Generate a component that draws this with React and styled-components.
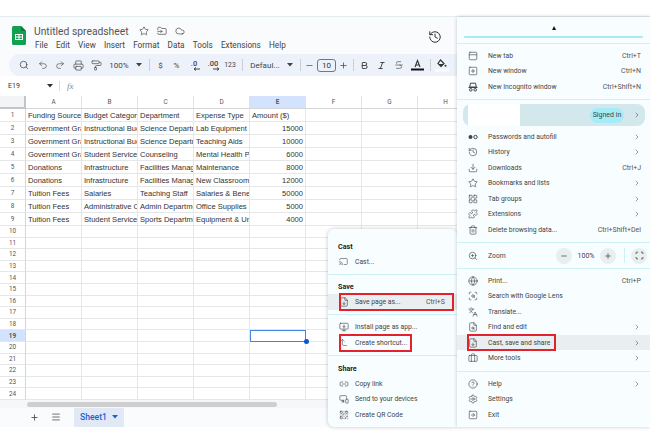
import React from 'react';
import styled, { createGlobalStyle } from 'styled-components';
import {
  Search, Undo2, Redo2, Printer, PaintRoller, Star, FolderInput, Cloud, History, Bold, Italic,
  Strikethrough, Minus, Plus, ChevronRight, PanelTop, SquarePlus, Download,
  LayoutGrid, Puzzle, Trash2, ZoomIn, Globe, ScanSearch, Languages, FileSearch, FileDown, Briefcase,
  CircleHelp, Settings, SquareArrowRight, Cast, MonitorDown, Link2, MonitorSmartphone, QrCode, Scan,
  Menu as MenuIcon, CornerLeftUp
} from 'lucide-react';

const Global = createGlobalStyle`
  html, body { margin: 0; padding: 0; background: #fff; }
  body { font-family: Roboto, "Liberation Sans", sans-serif; }
`;

const Page = styled.div`
  position: relative;
  width: 650px;
  height: 443px;
  overflow: hidden;
  background: #fff;
  padding-top: 16px;
  box-sizing: border-box;
`;
const Sheets = styled.div`
  width: 650px;
  height: 411px;
  background: #f9fbfd;
  border-top: 1px solid #e4eded;
  box-sizing: border-box;
  display: flex;
  flex-direction: column;
`;
const TitleBar = styled.div`
  height: 37px;
  flex: none;
  display: flex;
  padding: 9px 0 0 12px;
  box-sizing: border-box;
`;
const TitleBlock = styled.div`
  margin-left: 8px;
  margin-top: -2px;
  display: flex;
  flex-direction: column;
`;
const TitleLine = styled.div`
  display: flex;
  align-items: center;
  height: 14px;
  color: #444;
`;
const DocName = styled.span`
  font-size: 10.3px;
  color: #555;
  margin-right: 6px;
  white-space: nowrap;
`;
const TitleIcon = styled.span`
  display: inline-flex;
  width: 18px;
  justify-content: center;
  color: #333;
`;
const MenuBar = styled.div`
  display: flex;
  gap: 8.2px;
  margin-top: 1px;
  margin-left: 1px;
  font-size: 8.2px;
  line-height: 13px;
  color: #444;
`;
const HistoryBtn = styled.span`
  margin-left: auto;
  margin-right: 208px;
  margin-top: 3px;
  color: #333;
`;
const Toolbar = styled.div`
  height: 22px;
  flex: none;
  margin-left: 9px;
  padding-left: 6px;
  background: #edf2fa;
  border-radius: 11px 0 0 11px;
  display: flex;
  align-items: center;
  color: #444;
  font-size: 8px;
`;
const ToolBtn = styled.span`
  width: ${p => p.$w}px;
  flex: none;
  display: flex;
  align-items: center;
  justify-content: center;
  white-space: nowrap;
  font-size: ${p => (p.$small ? '6.8px' : 'inherit')};
`;
const ToolSep = styled.span`
  width: 8px;
  flex: none;
  height: 12px;
  background: linear-gradient(#c8ced6, #c8ced6) center / 1px 100% no-repeat;
`;
const SizeBox = styled.span`
  width: 19px;
  height: 13px;
  margin: 0 1px 0 2px;
  flex: none;
  border: 1px solid #777;
  border-radius: 3px;
  box-sizing: border-box;
  display: flex;
  align-items: center;
  justify-content: center;
  font-size: 8px;
  color: #333;
`;
const FormulaBar = styled.div`
  height: 20px;
  flex: none;
  background: #fff;
  display: flex;
  align-items: center;
  font-size: 7px;
  color: #333;
`;
const CellRef = styled.span`
  width: 47px;
  padding-left: 8px;
  box-sizing: border-box;
`;
const FxLabel = styled.span`
  margin-left: 6px;
  padding-left: 7px;
  border-left: 1px solid #ddd;
  font-family: "Liberation Serif", serif;
  font-style: italic;
  font-size: 9px;
  color: #888;
`;
const Grid = styled.div`
  flex: none;
  background: #fff;
  display: flex;
  flex-direction: column;
`;
const GridRow = styled.div`
  display: grid;
  grid-template-columns: 26px repeat(8, 56px);
  height: ${p => p.$h}px;
`;
const RowNum = styled.div`
  background: ${p => (p.$on ? '#d3e3fd' : '#fff')};
  border-right: 1px solid #d4d6d8;
  border-bottom: 1px solid #e6e7e8;
  box-sizing: border-box;
  display: flex;
  align-items: center;
  justify-content: center;
  font-size: 6.4px;
  font-weight: ${p => (p.$on ? 700 : 400)};
  color: #555;
`;
const Corner = styled(RowNum)`
  background: #f3f4f5;
  border-right: 2px solid #c2c4c6;
  border-bottom: 2px solid #c2c4c6;
`;
const ColHead = styled.div`
  background: ${p => (p.$on ? '#d3e3fd' : '#fff')};
  border-right: 1px solid #dfe1e3;
  border-bottom: 1px solid #d4d6d8;
  box-sizing: border-box;
  text-align: center;
  font-size: 6.4px;
  line-height: 12px;
  font-weight: ${p => (p.$on ? 700 : 400)};
  color: #555;
`;
const Cell = styled.div`
  border-right: 1px solid #e6e7e8;
  border-bottom: 1px solid #e6e7e8;
  box-sizing: border-box;
  padding: 0 2px;
  font-family: "Liberation Sans", Arial, sans-serif;
  font-size: 7.55px;
  line-height: 13px;
  color: #333;
  white-space: nowrap;
  overflow: hidden;
  text-align: ${p => (p.$num ? 'right' : 'left')};
`;
const SelectedCell = styled.div`
  position: relative;
  box-sizing: border-box;
  border: 1.5px solid #4285d8;
`;
const Handle = styled.span`
  position: absolute;
  right: -3.5px;
  bottom: -3.5px;
  width: 5px;
  height: 5px;
  border-radius: 50%;
  background: #0b57d0;
`;
const ScrollArea = styled.div`
  height: 8px;
  flex: none;
  padding: 2px 0 0 27px;
  box-sizing: border-box;
  background: #f6f7f8;
`;
const ScrollThumb = styled.div`
  width: 250px;
  height: 5px;
  border-radius: 3px;
  background: #cfcfcf;
`;
const BottomBar = styled.div`
  flex: 1;
  display: flex;
  align-items: center;
  color: #444;
  padding-left: 23px;
`;
const SheetBtn = styled.span`
  width: 22px;
  display: flex;
  justify-content: center;
`;
const SheetTab = styled.div`
  margin-left: 7px;
  width: 50px;
  height: 100%;
  background: #e1e9f7;
  color: #1a63cf;
  font-size: 8.6px;
  font-weight: 500;
  display: flex;
  align-items: center;
  justify-content: center;
  gap: 5px;
`;

const Panel = styled.div`
  position: absolute;
  top: ${p => p.$top}px;
  left: ${p => p.$left}px;
  width: ${p => p.$w}px;
  height: ${p => p.$h}px;
  background: #f8fdff;
  border-radius: ${p => p.$r};
  box-shadow: 0 0 4px rgba(0, 0, 0, 0.22);
  box-sizing: border-box;
  color: #444;
  font-size: 6.8px;
`;
const TopBlock = styled.div`
  height: 27px;
  padding: 8px 7px 0;
  box-sizing: border-box;
  display: flex;
  flex-direction: column;
  align-items: center;
  border-bottom: 1px solid #cdf1f8;
`;
const TopDot = styled.span`
  color: #111;
  font-size: 8px;
  line-height: 6px;
  height: 11px;
`;
const TopLine = styled.span`
  width: 100%;
  height: 2px;
  border-radius: 1px;
  background: #a5ecf8;
`;
const Section = styled.div`
  padding: ${p => p.$t ?? 4}px 0 ${p => p.$b ?? 4}px;
  border-bottom: ${p => (p.$last ? 'none' : '1px solid #cdf1f8')};
`;
const Row = styled.div`
  position: relative;
  height: 15.5px;
  display: flex;
  align-items: center;
  padding: 0 ${p => p.$pr ?? 9}px 0 ${p => p.$pl ?? 11}px;
  background: ${p => (p.$on ? '#e9eef0' : 'transparent')};
  white-space: nowrap;
`;
const Ico = styled.span`
  width: ${p => p.$w ?? 20}px;
  flex: none;
  display: flex;
  color: #444;
`;
const Label = styled.span`
  flex: 1;
`;
const Keys = styled.span`
  color: #555;
  font-size: 7px;
`;
const Heading = styled.div`
  height: 15.5px;
  line-height: 15.5px;
  padding-left: 10px;
  font-weight: 700;
  font-size: 7.2px;
  color: #222;
`;
const RedBox = styled.span`
  position: absolute;
  top: -1px;
  bottom: -1px;
  left: ${p => p.$l}px;
  width: ${p => p.$w}px;
  border: 2px solid #e3222e;
  box-sizing: border-box;
`;
const Profile = styled.div`
  height: 22px;
  margin: 0 5px 0 6px;
  border-radius: 8px;
  background: #d3e8ec;
  padding: 0 4px 0 5px;
  display: flex;
  align-items: center;
  justify-content: space-between;
  color: #444;
`;
const ProfileGap = styled.div`
  height: 3px;
`;
const WhiteBlock = styled.span`
  width: 52px;
  height: 22px;
  background: #fff;
`;
const ProfileEnd = styled.span`
  display: flex;
  align-items: center;
  gap: 9px;
`;
const Pill = styled.span`
  width: 34px;
  height: 15px;
  line-height: 15px;
  border-radius: 8px;
  background: #a5ecf8;
  text-align: center;
  font-size: 7px;
`;
const ZoomControls = styled.span`
  display: flex;
  align-items: center;
  margin-right: -6px;
`;
const RoundBtn = styled.span`
  width: 16px;
  height: 16px;
  border-radius: 50%;
  background: #e9eef0;
  display: flex;
  align-items: center;
  justify-content: center;
  color: #333;
`;
const ZoomPct = styled.span`
  width: 28px;
  text-align: center;
  font-size: 7px;
`;
const ZoomDivider = styled.span`
  width: 1px;
  height: 15px;
  background: #cdf1f8;
  margin: 0 6px 0 8px;
`;
const ZoomSection = styled(Section)`
  border-top: 1px solid #cdf1f8;
`;

const I = (C, s = 10, w = 1.5) => <C size={s} strokeWidth={w} />;
const Caret = () => (
  <svg width="6" height="4" viewBox="0 0 6 4"><path d="M0 0h6L3 3.5z" fill="currentColor" /></svg>
);
const Logo = () => (
  <svg width="14" height="19" viewBox="0 0 14 19">
    <path d="M1.5 0H9l5 5v12.5a1.5 1.5 0 0 1-1.5 1.5h-11A1.5 1.5 0 0 1 0 17.500V1.500A1.500 1.500 0 0 1 1.500 0z" fill="#12a150" />
    <path d="M9 0l5 5H9z" fill="#0c7a3c" />
    <path d="M3 8h8v6H3zM4 9v1.400h2.500V9zM7.500 9v1.400H10V9zM4 11.600V13h2.500v-1.400zM7.500 11.600V13H10v-1.400z" fill="#fff" fillRule="evenodd" />
  </svg>
);
const TextColor = () => (
  <svg width="13" height="12" viewBox="0 0 13 12">
    <path d="M4 8L6.500 1.500 9 8M4.900 6h3.200" fill="none" stroke="#333" strokeWidth="1.100" />
    <rect x="0" y="9.500" width="13" height="2" fill="#111" />
  </svg>
);
const FillColor = () => (
  <svg width="14" height="13" viewBox="0 0 14 13">
    <path d="M5.500 1l3.500 3.500-3 3L3 4.500z" fill="none" stroke="#333" strokeWidth="1.200" />
    <path d="M3.500 5h5.500l-3 2.800z" fill="#333" />
    <circle cx="10.500" cy="6.800" r="1" fill="#333" />
    <rect x="0" y="10.500" width="14" height="2" fill="#fff" />
  </svg>
);
const Dec = ({ t, m }) => (
  <svg width="16" height="12" viewBox="0 0 16 12">
    <text x="8" y="7" textAnchor="middle" fontSize="7.500" fontWeight="500" fill="#444" fontFamily="Roboto">{t}</text>
    <path d={m} stroke="#444" strokeWidth="1" fill="none" />
  </svg>
);
const Incognito = () => (
  <svg width="10" height="10" viewBox="0 0 10 10">
    <path d="M2.500 1.200h5L8.300 5H1.700zM.5 5.500h9" stroke="#444" strokeWidth="1" fill="none" />
    <circle cx="2.800" cy="7.800" r="1.300" stroke="#444" fill="none" />
    <circle cx="7.200" cy="7.800" r="1.300" stroke="#444" fill="none" />
  </svg>
);
const KeyGlyph = () => (
  <svg width="10" height="10" viewBox="0 0 10 10">
    <circle cx="2.500" cy="5" r="2" fill="#444" />
    <circle cx="7.500" cy="5" r="1.700" stroke="#444" fill="none" />
  </svg>
);

const rows = [
  ['Funding Source', 'Budget Category', 'Department', 'Expense Type', 'Amount ($)'],
  ['Government Gra', 'Instructional Bud', 'Science Departm', 'Lab Equipment', '15000'],
  ['Government Gra', 'Instructional Bud', 'Science Departm', 'Teaching Aids', '10000'],
  ['Government Gra', 'Student Services', 'Counseling', 'Mental Health P', '6000'],
  ['Donations', 'Infrastructure', 'Facilities Manag', 'Maintenance', '8000'],
  ['Donations', 'Infrastructure', 'Facilities Manag', 'New Classrooms', '12000'],
  ['Tuition Fees', 'Salaries', 'Teaching Staff', 'Salaries & Benef', '50000'],
  ['Tuition Fees', 'Administrative C', 'Admin Departme', 'Office Supplies', '5000'],
  ['Tuition Fees', 'Student Services', 'Sports Departme', 'Equipment & Un', '4000'],
];
const cols = ['A', 'B', 'C', 'D', 'E', 'F', 'G', 'H'];

const Chev = () => <ChevronRight size={8} strokeWidth={1.6} />;

const MenuRow = ({ icon, label, keys, arrow, on, box }) => (
  <Row $on={on}>
    <Ico>{icon}</Ico>
    <Label>{label}</Label>
    {keys && <Keys>{keys}</Keys>}
    {arrow && <Chev />}
    {box && <RedBox $l={box[0]} $w={box[1]} />}
  </Row>
);
const SubRow = ({ icon, label, keys, on, box }) => (
  <Row $on={on} $pl={11} $pr={12}>
    <Ico $w={16}>{icon}</Ico>
    <Label>{label}</Label>
    {keys && <Keys>{keys}</Keys>}
    {box && <RedBox $l={box[0]} $w={box[1]} />}
  </Row>
);

export default function App() {
  return (
    <Page>
      <Global />
      <Sheets>
        <TitleBar>
          <Logo />
          <TitleBlock>
            <TitleLine>
              <DocName>Untitled spreadsheet</DocName>
              <TitleIcon>{I(Star, 10)}</TitleIcon>
              <TitleIcon>{I(FolderInput, 10)}</TitleIcon>
              <TitleIcon>{I(Cloud, 10)}</TitleIcon>
            </TitleLine>
            <MenuBar>
              {['File', 'Edit', 'View', 'Insert', 'Format', 'Data', 'Tools', 'Extensions', 'Help'].map(m => (
                <span key={m}>{m}</span>
              ))}
            </MenuBar>
          </TitleBlock>
          <HistoryBtn>{I(History, 14, 1.7)}</HistoryBtn>
        </TitleBar>
        <Toolbar>
          <ToolBtn $w={18.5}>{I(Search, 10, 1.8)}</ToolBtn>
          <ToolBtn $w={18}>{I(Undo2, 10)}</ToolBtn>
          <ToolBtn $w={17.5}>{I(Redo2, 10)}</ToolBtn>
          <ToolBtn $w={18}>{I(Printer, 11)}</ToolBtn>
          <ToolBtn $w={18}>{I(PaintRoller, 11)}</ToolBtn>
          <ToolBtn $w={28}>100%</ToolBtn>
          <ToolBtn $w={12}><Caret /></ToolBtn>
          <ToolSep />
          <ToolBtn $w={15}>$</ToolBtn>
          <ToolBtn $w={17}>%</ToolBtn>
          <ToolBtn $w={18}><Dec t=".0" m="M8 10h6M10 8.500L8 10l2 1.500" /></ToolBtn>
          <ToolBtn $w={19}><Dec t=".00" m="M8 10h6M12 8.500l2 1.500-2 1.500" /></ToolBtn>
          <ToolBtn $w={16} $small>123</ToolBtn>
          <ToolSep />
          <ToolBtn $w={38}>Defaul...</ToolBtn>
          <ToolBtn $w={12}><Caret /></ToolBtn>
          <ToolSep />
          <ToolBtn $w={11}>{I(Minus, 9, 1.8)}</ToolBtn>
          <SizeBox>10</SizeBox>
          <ToolBtn $w={12}>{I(Plus, 9, 2)}</ToolBtn>
          <ToolSep />
          <ToolBtn $w={15}>{I(Bold, 9, 2.6)}</ToolBtn>
          <ToolBtn $w={18}>{I(Italic, 9, 2.6)}</ToolBtn>
          <ToolBtn $w={18}>{I(Strikethrough, 10)}</ToolBtn>
          <ToolBtn $w={18}><TextColor /></ToolBtn>
          <ToolSep />
          <ToolBtn $w={16}><FillColor /></ToolBtn>
        </Toolbar>
        <FormulaBar>
          <CellRef>E19</CellRef>
          <Caret />
          <FxLabel>fx</FxLabel>
        </FormulaBar>
        <Grid>
          <GridRow $h={13}>
            <Corner />
            {cols.map(c => <ColHead key={c} $on={c === 'E'}>{c}</ColHead>)}
          </GridRow>
          {Array.from({ length: 24 }, (_, r) => (
            <GridRow key={r} $h={r < 9 ? 13 : 11.6}>
              <RowNum $on={r === 18}>{r + 1}</RowNum>
              {cols.map((c, i) => {
                if (r === 18 && c === 'E') return <SelectedCell key={c}><Handle /></SelectedCell>;
                return (
                  <Cell key={c} $num={r > 0 && i === 4}>{rows[r] ? rows[r][i] : ''}</Cell>
                );
              })}
            </GridRow>
          ))}
        </Grid>
        <ScrollArea><ScrollThumb /></ScrollArea>
        <BottomBar>
          <SheetBtn>{I(Plus, 9, 2.2)}</SheetBtn>
          <SheetBtn>{I(MenuIcon, 10, 1.8)}</SheetBtn>
          <SheetTab>Sheet1 <Caret /></SheetTab>
        </BottomBar>
      </Sheets>

      <Panel $top={229} $left={328} $w={129} $h={198} $r="6px 6px 0 6px">
        <Section $t={9.5} $b={4}>
          <Heading>Cast</Heading>
          <SubRow icon={I(Cast, 9)} label="Cast..." />
        </Section>
        <Section $t={4} $b={4.5}>
          <Heading>Save</Heading>
          <SubRow icon={I(FileDown, 10)} label="Save page as..." keys="Ctrl+S" on box={[11, 115]} />
        </Section>
        <Section $t={4.5} $b={4.5}>
          <SubRow icon={I(MonitorDown, 10)} label="Install page as app..." />
          <SubRow icon={I(CornerLeftUp, 9)} label="Create shortcut..." box={[11, 73]} />
        </Section>
        <Section $t={4.5} $b={0} $last>
          <Heading>Share</Heading>
          <SubRow icon={I(Link2, 10)} label="Copy link" />
          <SubRow icon={I(MonitorSmartphone, 10)} label="Send to your devices" />
          <SubRow icon={I(QrCode, 10)} label="Create QR Code" />
        </Section>
      </Panel>

      <Panel $top={17} $left={457} $w={193} $h={410} $r="0">
        <TopBlock>
          <TopDot>▴</TopDot>
          <TopLine />
        </TopBlock>
        <Section>
          <MenuRow icon={I(PanelTop, 10)} label="New tab" keys="Ctrl+T" />
          <MenuRow icon={I(SquarePlus, 10)} label="New window" keys="Ctrl+N" />
          <MenuRow icon={<Incognito />} label="New Incognito window" keys="Ctrl+Shift+N" />
        </Section>
        <Section $t={4.5} $b={4.5} $last>
          <Profile>
            <WhiteBlock />
            <ProfileEnd><Pill>Signed in</Pill><Chev /></ProfileEnd>
          </Profile>
          <ProfileGap />
          <MenuRow icon={<KeyGlyph />} label="Passwords and autofill" arrow />
          <MenuRow icon={I(History, 10)} label="History" arrow />
          <MenuRow icon={I(Download, 10)} label="Downloads" keys="Ctrl+J" />
          <MenuRow icon={I(Star, 10)} label="Bookmarks and lists" arrow />
          <MenuRow icon={I(LayoutGrid, 10)} label="Tab groups" arrow />
          <MenuRow icon={I(Puzzle, 10)} label="Extensions" arrow />
          <MenuRow icon={I(Trash2, 10)} label="Delete browsing data..." keys="Ctrl+Shift+Del" />
        </Section>
        <ZoomSection $t={4.75} $b={4.25}>
          <Row>
            <Ico>{I(ZoomIn, 10)}</Ico>
            <Label>Zoom</Label>
            <ZoomControls>
              <RoundBtn>{I(Minus, 8, 2)}</RoundBtn>
              <ZoomPct>100%</ZoomPct>
              <RoundBtn>{I(Plus, 8, 2)}</RoundBtn>
              <ZoomDivider />
              <RoundBtn>{I(Scan, 9, 2)}</RoundBtn>
            </ZoomControls>
          </Row>
        </ZoomSection>
        <Section $t={4.25} $b={4.75}>
          <MenuRow icon={I(Globe, 10)} label="Print..." keys="Ctrl+P" />
          <MenuRow icon={I(ScanSearch, 10)} label="Search with Google Lens" />
          <MenuRow icon={I(Languages, 10)} label="Translate..." />
          <MenuRow icon={I(FileSearch, 10)} label="Find and edit" arrow />
          <MenuRow icon={I(FileDown, 10)} label="Cast, save and share" arrow on box={[10, 89]} />
          <MenuRow icon={I(Briefcase, 10)} label="More tools" arrow />
        </Section>
        <Section $t={4.25} $b={0} $last>
          <MenuRow icon={I(CircleHelp, 10)} label="Help" arrow />
          <MenuRow icon={I(Settings, 10)} label="Settings" />
          <MenuRow icon={I(SquareArrowRight, 10)} label="Exit" />
        </Section>
      </Panel>
    </Page>
  );
}
